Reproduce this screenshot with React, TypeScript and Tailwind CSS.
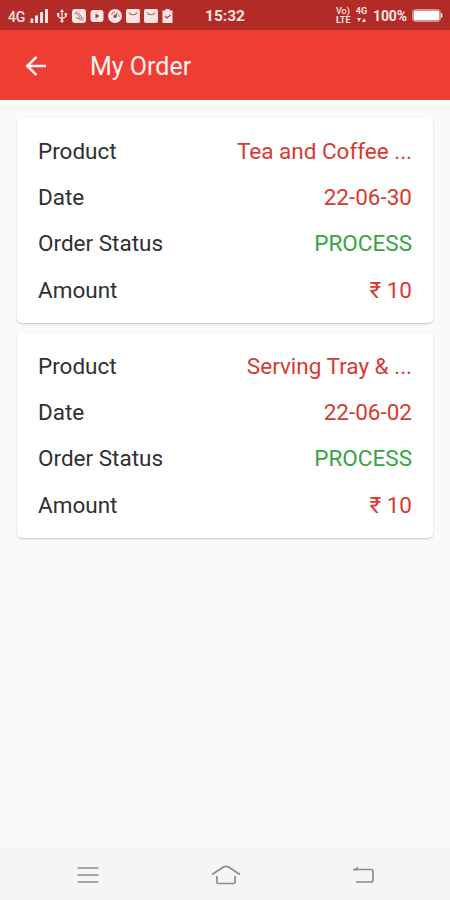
import type { ReactNode } from 'react';

interface Order {
    product: string;
    date: string;
    status: string;
    amount: string;
}

const orders: Order[] = [
    { product: 'Tea and Coffee ...', date: '22-06-30', status: 'PROCESS', amount: '₹ 10' },
    { product: 'Serving Tray & ...', date: '22-06-02', status: 'PROCESS', amount: '₹ 10' },
];

function StatusIcon({ width = 14, children }: { width?: number; children: ReactNode }) {
    return (
        <svg width={width} height="14" viewBox={`0 0 ${width} 14`} fill="none">
            {children}
        </svg>
    );
}

function StatusBar() {
    return (
        <div className="h-[30px] shrink-0 bg-[#b32b26] text-[#fbe6e4] flex items-center pl-2 pr-[7px] pt-[1px]">
            <div className="w-[197px] flex items-center">
                <span className="w-[19px] text-[14px] leading-none font-medium tracking-[-0.2px] pt-[3px]">4G</span>
                <svg className="ml-[3px]" width="19" height="15" viewBox="0 0 19 15" fill="currentColor">
                    <rect x="0.5" y="10.5" width="2.8" height="4.5" />
                    <rect x="5" y="7.5" width="3" height="7.5" />
                    <rect x="10" y="4" width="3" height="11" />
                    <rect x="15" y="1" width="3" height="14" />
                </svg>
                <div className="flex items-center gap-1 ml-[7px]">
                    {/* USB */}
                    <StatusIcon width={12}>
                        <path d="M6 2v10M2 5v2.5l4 2.5 4-2.5V5" stroke="currentColor" strokeWidth="1.3" />
                        <path d="M6 0l2 3H4zM1 4h2.4v2.4H1zM8.6 4H11v2.4H8.6z" fill="currentColor" />
                        <circle cx="6" cy="12" r="1.6" fill="currentColor" />
                    </StatusIcon>
                    <div className="flex items-center gap-1">
                        <StatusIcon>
                            <rect width="14" height="14" rx="3" fill="currentColor" />
                            <path d="M3 5.5c0-3 3.5-3 4-.5l3.5 3.5c2 1.5 0 3.5-2 2L4 8.5M4 4l6 6M6 8l3 3" stroke="#b9716c" strokeWidth="1" />
                        </StatusIcon>
                        <StatusIcon>
                            <rect x="0.5" y="1" width="13" height="12" rx="3" fill="currentColor" />
                            <path d="M5.5 4.5l4 2.5-4 2.5z" fill="#a93a34" />
                        </StatusIcon>
                        <StatusIcon>
                            <circle cx="7" cy="7" r="7" fill="currentColor" />
                            <path d="M3.5 6A4 4 0 0 1 7 3M10.5 5.5A4 4 0 0 1 11 8" stroke="#b9716c" strokeWidth="1" />
                            <path d="M10 3L8 8.5 6 7z" fill="#a93a34" />
                            <circle cx="7" cy="7.5" r="1.5" fill="#a93a34" />
                        </StatusIcon>
                        <StatusIcon>
                            <rect width="14" height="14" rx="2" fill="currentColor" />
                            <path d="M3 3.5c1.5 3 6.5 3 8 0" stroke="#b9605a" strokeWidth="1.2" />
                        </StatusIcon>
                        <StatusIcon>
                            <rect width="14" height="14" rx="2" fill="currentColor" />
                            <path d="M3 3.5c1.5 3 6.5 3 8 0" stroke="#b9605a" strokeWidth="1.2" />
                        </StatusIcon>
                        <StatusIcon width={12}>
                            <path d="M3.5 0h4v1.5h3V14H.5V1.5h3z" fill="currentColor" />
                            <path d="M3 7l2 2 3.5-3" stroke="#a93a34" strokeWidth="1.2" />
                        </StatusIcon>
                    </div>
                </div>
            </div>
            <span className="text-[15.5px] leading-none font-bold pt-[2px]">15:32</span>
            <div className="ml-auto flex items-center">
                <div className="w-[18px] flex flex-col gap-px">
                    <span className="h-[8px] text-[9px] leading-[8px] font-medium">Vo)</span>
                    <span className="h-[8px] text-[9px] leading-[8px] font-bold">LTE</span>
                </div>
                <div className="w-[13px] ml-[1px] flex flex-col items-center gap-px">
                    <span className="h-[8px] text-[9px] leading-[8px] font-bold">4G</span>
                    <svg width="9" height="8" viewBox="0 0 9 8" fill="currentColor">
                        <path d="M0 2h4L2 6zM5 6h4L7 2z" />
                    </svg>
                </div>
                <span className="ml-[5px] w-[35px] text-[14px] leading-none font-bold tracking-[-0.1px]">100%</span>
                <svg className="ml-[4px]" width="31" height="13" viewBox="0 0 31 13" fill="none">
                    <rect x="0.5" y="0.5" width="28" height="12" rx="3" stroke="#dd8f8a" />
                    <rect x="1.5" y="1.5" width="26" height="10" rx="1.5" fill="#fff" />
                    <path d="M29 4c2 0 2 5 0 5z" fill="currentColor" />
                </svg>
            </div>
        </div>
    );
}

function AppBar() {
    return (
        <header className="h-[70px] shrink-0 bg-[#ee3e33] text-[#fff2f0] flex items-center pl-[25px] pt-[1px]">
            <svg width="22" height="22" viewBox="0 0 22 22" fill="none" stroke="currentColor" strokeWidth="2.5">
                <path d="M21 11H2.5M11.5 1.8L2.2 11l9.3 9.2" />
            </svg>
            <h1 className="ml-[43px] text-[25px] leading-none pt-[1px]">My Order</h1>
        </header>
    );
}

function Row({ label, value, color }: { label: string; value: string; color: string }) {
    return (
        <div className="h-[46.3px] flex items-center justify-between">
            <span className="text-[#303030]">{label}</span>
            <span className={color}>{value}</span>
        </div>
    );
}

function OrderCard({ order }: { order: Order }) {
    return (
        <div className="h-[205px] bg-white rounded-[5px] shadow-[0_1px_2px_rgba(0,0,0,0.22)] px-[21px] pt-[10px] text-[22.5px] leading-none">
            <Row label="Product" value={order.product} color="text-[#d63a32]" />
            <Row label="Date" value={order.date} color="text-[#d63a32]" />
            <Row label="Order Status" value={order.status} color="text-[#37a444]" />
            <Row label="Amount" value={order.amount} color="text-[#d63a32]" />
        </div>
    );
}

function NavBar() {
    return (
        <nav className="h-[52px] shrink-0 bg-[#f5f5f5] text-[#8c8c8c] flex items-center justify-between pl-[77px] pr-[75px] pt-[1px]">
            <svg width="22" height="18" viewBox="0 0 22 18" stroke="currentColor" strokeWidth="1.7">
                <path d="M.5 2h21M.5 9h21M.5 16h21" />
            </svg>
            <svg width="30" height="20" viewBox="0 0 30 20" fill="none" stroke="currentColor" strokeWidth="1.7">
                <path d="M1 9.500L12 2.200q3-1.600 6 0L29 9.500M6 11v6q0 1.500 1.500 1.500h15q1.500 0 1.500-1.500v-6" />
            </svg>
            <svg width="22" height="18" viewBox="0 0 22 18" fill="none" stroke="currentColor" strokeWidth="1.7">
                <path d="M0 3.500h18q2 0 2 2v8.500q0 2-2 2H3" />
                <path d="M0 4.300L5 0.500v3.800z" fill="currentColor" stroke="none" />
            </svg>
        </nav>
    );
}

export default function App() {
    return (
        <div className="w-full h-screen flex flex-col overflow-hidden bg-[#fafafa] font-['Roboto',sans-serif]">
            <StatusBar />
            <AppBar />
            <main className="flex-1 flex flex-col gap-[10px] px-[17px] pt-[18px]">
                {orders.map((order) => (
                    <OrderCard key={order.date} order={order} />
                ))}
            </main>
            <NavBar />
        </div>
    );
}
